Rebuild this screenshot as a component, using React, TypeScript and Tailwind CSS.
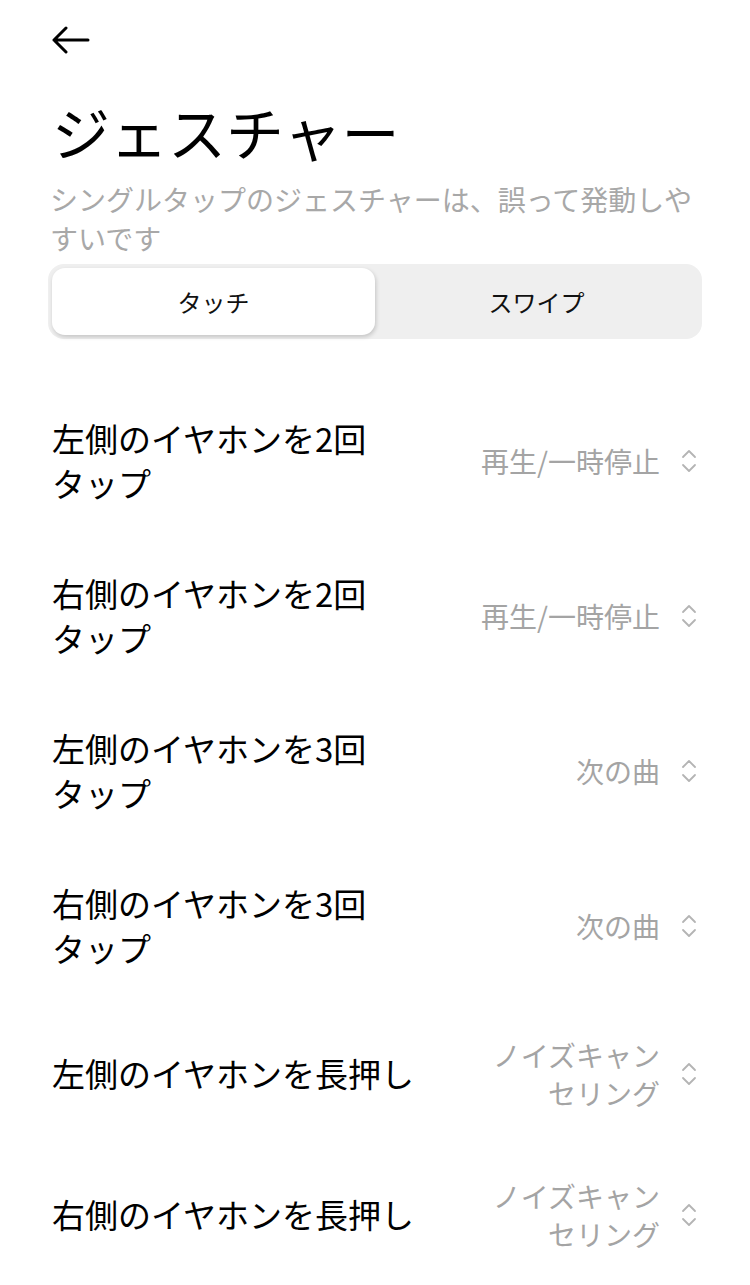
import { Fragment } from "react";

interface GestureRow {
  label: string[];
  value: string[];
}

const rows: GestureRow[] = [
  { label: ["左側のイヤホンを2回", "タップ"], value: ["再生/一時停止"] },
  { label: ["右側のイヤホンを2回", "タップ"], value: ["再生/一時停止"] },
  { label: ["左側のイヤホンを3回", "タップ"], value: ["次の曲"] },
  { label: ["右側のイヤホンを3回", "タップ"], value: ["次の曲"] },
  { label: ["左側のイヤホンを長押し"], value: ["ノイズキャン", "セリング"] },
  { label: ["右側のイヤホンを長押し"], value: ["ノイズキャン", "セリング"] },
];

const font = {
  fontFamily: '"Noto Sans CJK JP", "Noto Sans", sans-serif',
};

const Lines = ({ parts }: { parts: string[] }) => (
  <>
    {parts.map((p, i) => (
      <Fragment key={i}>
        {i > 0 && <wbr />}
        {p}
      </Fragment>
    ))}
  </>
);

const UpDownIcon = () => (
  <svg width="18" height="26" viewBox="0 0 18 26" fill="none" className="shrink-0">
    <path d="M3 9 L9 3 L15 9" stroke="#b4b4b4" strokeWidth="1.8" strokeLinecap="round" strokeLinejoin="round" />
    <path d="M3 17 L9 23 L15 17" stroke="#b4b4b4" strokeWidth="1.8" strokeLinecap="round" strokeLinejoin="round" />
  </svg>
);

export default function App() {
  return (
    <div className="min-h-[1285px] w-[750px] bg-white px-[52px]" style={font}>
      {/* header */}
      <div className="flex h-[80px] items-center">
        <svg width="40" height="30" viewBox="0 0 40 30" fill="none">
          <path d="M36 15 H2 M14 3 L2 15 L14 27" stroke="#000" strokeWidth="3" strokeLinecap="round" strokeLinejoin="round" />
        </svg>
      </div>

      <h1 className="mt-[19px] text-[58px] font-normal leading-[64px] text-black">ジェスチャー</h1>
      <p className="-ml-[2px] mt-[17px] break-keep text-[28px] leading-[39px] text-[#a8a8a8]">
        シングルタップのジェスチャーは、誤って発動しや<wbr />すいです
      </p>

      {/* segmented control */}
      <div className="-mx-[4px] mt-[6px] flex h-[75px] rounded-[16px] bg-[#efefef] p-[4px]">
        <div className="flex flex-1 items-center justify-center rounded-[13px] bg-white text-[24px] text-[#111] shadow-[1px_2px_4px_rgba(0,0,0,0.18)]">
          タッチ
        </div>
        <div className="flex flex-1 items-center justify-center text-[24px] text-[#111]">スワイプ</div>
      </div>

      {/* rows */}
      <div className="mt-[44px]">
        {rows.map((row, i) => (
          <div key={i} className="flex items-center gap-[24px] py-[32.5px]">
            <div className="min-w-0 max-w-[370px] flex-1 break-keep text-[33px] font-normal leading-[45px] text-black">
              <Lines parts={row.label} />
            </div>
            <div className="ml-auto flex shrink-0 items-center gap-[20px]">
              <div className="max-w-[186px] break-keep text-right text-[28px] leading-[38px] text-[#a4a4a4]">
                <Lines parts={row.value} />
              </div>
              <UpDownIcon />
            </div>
          </div>
        ))}
      </div>
    </div>
  );
}
